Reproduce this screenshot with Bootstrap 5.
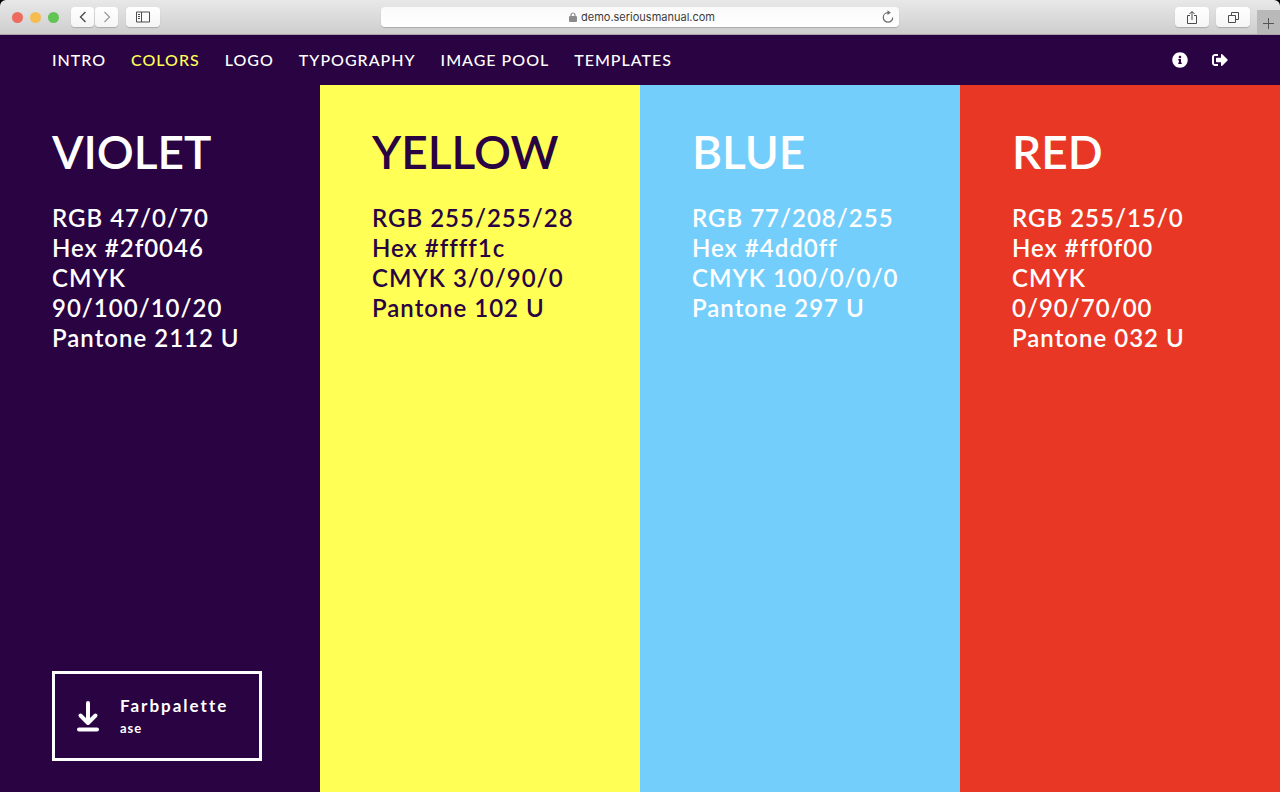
<!DOCTYPE html>
<html lang="en">
<head>
<meta charset="utf-8">
<meta name="viewport" content="width=device-width, initial-scale=1">
<title>Colors</title>
<link href="https://cdn.jsdelivr.net/npm/bootstrap@5.3.0/dist/css/bootstrap.min.css" rel="stylesheet">
<style>
  :root { --violet: #290342; --yellow: #ffff55; --blue: #74cefb; --red: #e93726; --gutter: 52px; }
  body { font-family: Lato, "Liberation Sans", sans-serif; background: #000; color: #fff; }
  .window { border-radius: 6px 6px 0 0; overflow: hidden; }

  /* Browser toolbar */
  .toolbar { height: 35px; background: linear-gradient(#e8e8e8, #cecece); border-bottom: 1px solid #a9a4ac; }
  .lights { gap: 7px; margin-left: 12px; }
  .light { width: 11px; height: 11px; border-radius: 50%; }
  .light-close { background: #ee6a5f; }
  .light-min { background: #f5bd4f; }
  .light-zoom { background: #61c455; }
  .history { gap: 1px; }
  .tool { height: 20px; padding: 0; border: 0; border-radius: 4px; background: linear-gradient(#fff, #f5f5f5); color: #4c4c4c; box-shadow: 0 1px 1px rgba(0,0,0,.2); display: flex; align-items: center; justify-content: center; }
  .tool-arrow { width: 23px; }
  .tool-wide { width: 34px; }
  .tools-end { gap: 7px; }
  .address { height: 20px; width: 518px; border-radius: 4px; background: linear-gradient(#fafafa, #fff); box-shadow: 0 1px 1px rgba(0,0,0,.2); }
  .address input { font: 11px/20px Inter, "Liberation Sans", sans-serif; color: #3b3b3b; width: 134px; padding: 0; border: 0; background: none; }
  .side { flex: 1 1 0; }
  .newtab { width: 23px; height: 24px; border: 0; padding: 0; background: #b9b9b9; color: #555; }

  /* Site navigation */
  .site-nav { height: 50px; padding: 0 var(--gutter); background: var(--violet); }
  .site-nav a { color: #fff; text-decoration: none; }
  .site-nav .menu { gap: 25px; font-size: 16px; font-weight: 500; letter-spacing: 1px; line-height: 24px; }
  .site-nav .menu a.current { color: var(--yellow); }
  .site-nav svg { display: block; }

  /* Colour swatches */
  .swatch { padding: 38px var(--gutter) 31px; }
  .swatch h1 { font-size: 46px; line-height: 58px; font-weight: 600; margin: 0 0 22px; }
  .swatch p { font-size: 24px; line-height: 30px; font-weight: 600; letter-spacing: 1px; margin: 0; }
  .swatch-violet { background: var(--violet); }
  .swatch-yellow { background: var(--yellow); color: var(--violet); }
  .swatch-blue { background: var(--blue); }
  .swatch-red { background: var(--red); }
  .download { width: 210px; height: 90px; border: 3px solid #fff; padding: 0 22px; gap: 21px; color: #fff; background: none; text-align: left; }
  .download strong { display: block; font-size: 17px; line-height: 24px; font-weight: 700; letter-spacing: 2px; }
  .download small { display: block; font-size: 13px; line-height: 20px; font-weight: 700; letter-spacing: 1px; }
</style>
</head>
<body>
<div class="window d-flex flex-column min-vh-100">
  <header class="toolbar d-flex align-items-center flex-shrink-0">
    <div class="side d-flex align-items-center">
      <div class="lights d-flex">
        <span class="light light-close"></span><span class="light light-min"></span><span class="light light-zoom"></span>
      </div>
      <div class="history d-flex ms-2 ps-1">
        <button class="tool tool-arrow" aria-label="Back"><svg width="8" height="12" fill="none" stroke="currentColor" stroke-width="1.4"><path d="M6.500 1 1.500 6l5 5"/></svg></button>
        <button class="tool tool-arrow" aria-label="Forward"><svg width="8" height="12" fill="none" stroke="#999" stroke-width="1.2"><path d="m1.500 1 5 5-5 5"/></svg></button>
      </div>
      <button class="tool tool-wide ms-2" aria-label="Sidebar"><svg width="14" height="12" fill="none" stroke="currentColor"><path d="M.5 1h13v10H.5zM5.500 1v10M2 3.500h2M2 5.500h2M2 7.500h2"/></svg></button>
    </div>
    <div class="address d-flex align-items-center">
      <span class="side ps-2"></span>
      <svg class="me-1" width="8" height="10"><path d="M2 5V3a2 2 0 0 1 4 0v2" fill="none" stroke="#8b8b8b" stroke-width="1.200"/><rect y="4" width="8" height="6" rx="1" fill="#8b8b8b"/></svg>
      <input type="text" aria-label="Address" value="demo.seriousmanual.com">
      <span class="side d-flex justify-content-end pe-1">
        <svg width="14" height="14" fill="none" stroke="#6c6c6c" stroke-width="1.200"><path d="M8 2.700H7a4.700 4.700 0 1 0 4.700 4.700"/><path d="m6.500.3 3.300 2.400-3.300 2.400z" fill="#6c6c6c" stroke="none"/></svg>
      </span>
    </div>
    <div class="side tools-end d-flex justify-content-end align-items-center align-self-stretch">
      <button class="tool tool-wide" aria-label="Share"><svg width="12" height="15" fill="none" stroke="currentColor"><path d="M4 5.500H1.500v8h9v-8H8M6 10V1.500M3.500 4 6 1.500 8.500 4"/></svg></button>
      <button class="tool tool-wide" aria-label="Tabs"><svg width="13" height="12" fill="none" stroke="currentColor"><path d="M1.500 4.500h7v7h-7zM4.500 4.500v-3h7v7h-3"/></svg></button>
      <button class="newtab align-self-end" aria-label="New tab"><svg width="11" height="11" fill="none" stroke="currentColor"><path d="M5.500 0v11M0 5.500h11"/></svg></button>
    </div>
  </header>

  <nav class="site-nav d-flex align-items-center justify-content-between flex-shrink-0">
    <div class="menu d-flex">
      <a href="#">INTRO</a><a href="#" class="current" aria-current="page">COLORS</a><a href="#">LOGO</a><a href="#">TYPOGRAPHY</a><a href="#">IMAGE POOL</a><a href="#">TEMPLATES</a>
    </div>
    <div class="d-flex align-items-center gap-4">
      <a href="#" aria-label="Info"><svg width="16" height="16" viewBox="0 0 512 512" fill="currentColor"><path d="M256 8C119 8 8 119.100 8 256c0 137 111 248 248 248s248-111 248-248C504 119.100 393 8 256 8zm0 110c23.200 0 42 18.800 42 42s-18.800 42-42 42-42-18.800-42-42 18.800-42 42-42zm56 254c0 6.600-5.400 12-12 12h-88c-6.600 0-12-5.400-12-12v-24c0-6.600 5.400-12 12-12h12v-64h-12c-6.600 0-12-5.400-12-12v-24c0-6.600 5.400-12 12-12h64c6.600 0 12 5.400 12 12v100h12c6.600 0 12 5.400 12 12v24z"/></svg></a>
      <a href="#" aria-label="Sign out"><svg width="16" height="16" viewBox="0 0 512 512" fill="currentColor"><path d="M497 273 329 441c-15 15-41 4.500-41-17v-96H152c-13.300 0-24-10.700-24-24v-96c0-13.300 10.700-24 24-24h136V88c0-21.400 25.900-32 41-17l168 168c9.300 9.400 9.300 24.600 0 34zM192 436v-40c0-6.600-5.400-12-12-12H96c-17.700 0-32-14.300-32-32V160c0-17.700 14.300-32 32-32h84c6.600 0 12-5.400 12-12V76c0-6.600-5.400-12-12-12H96c-53 0-96 43-96 96v192c0 53 43 96 96 96h84c6.600 0 12-5.400 12-12z"/></svg></a>
    </div>
  </nav>

  <main class="row g-0 flex-grow-1">
    <section class="col-3 swatch swatch-violet d-flex flex-column align-items-start">
      <h1>VIOLET</h1>
      <p>RGB 47/0/70<br>Hex #2f0046<br>CMYK<br>90/100/10/20<br>Pantone 2112 U</p>
      <button class="download d-flex align-items-center mt-auto">
        <svg class="flex-shrink-0" width="22" height="32" fill="none" stroke="#fff" stroke-width="4" stroke-linecap="round" stroke-linejoin="round"><path d="M11 3v20M3.500 15.500 11 23l7.500-7.500M2 29.500h18"/></svg>
        <span><strong>Farbpalette</strong><small>ase</small></span>
      </button>
    </section>
    <section class="col-3 swatch swatch-yellow">
      <h1>YELLOW</h1>
      <p>RGB 255/255/28<br>Hex #ffff1c<br>CMYK 3/0/90/0<br>Pantone 102 U</p>
    </section>
    <section class="col-3 swatch swatch-blue">
      <h1>BLUE</h1>
      <p>RGB 77/208/255<br>Hex #4dd0ff<br>CMYK 100/0/0/0<br>Pantone 297 U</p>
    </section>
    <section class="col-3 swatch swatch-red">
      <h1>RED</h1>
      <p>RGB 255/15/0<br>Hex #ff0f00<br>CMYK<br>0/90/70/00<br>Pantone 032 U</p>
    </section>
  </main>
</div>
<script src="https://cdn.jsdelivr.net/npm/bootstrap@5.3.0/dist/js/bootstrap.bundle.min.js"></script>
</body>
</html>
